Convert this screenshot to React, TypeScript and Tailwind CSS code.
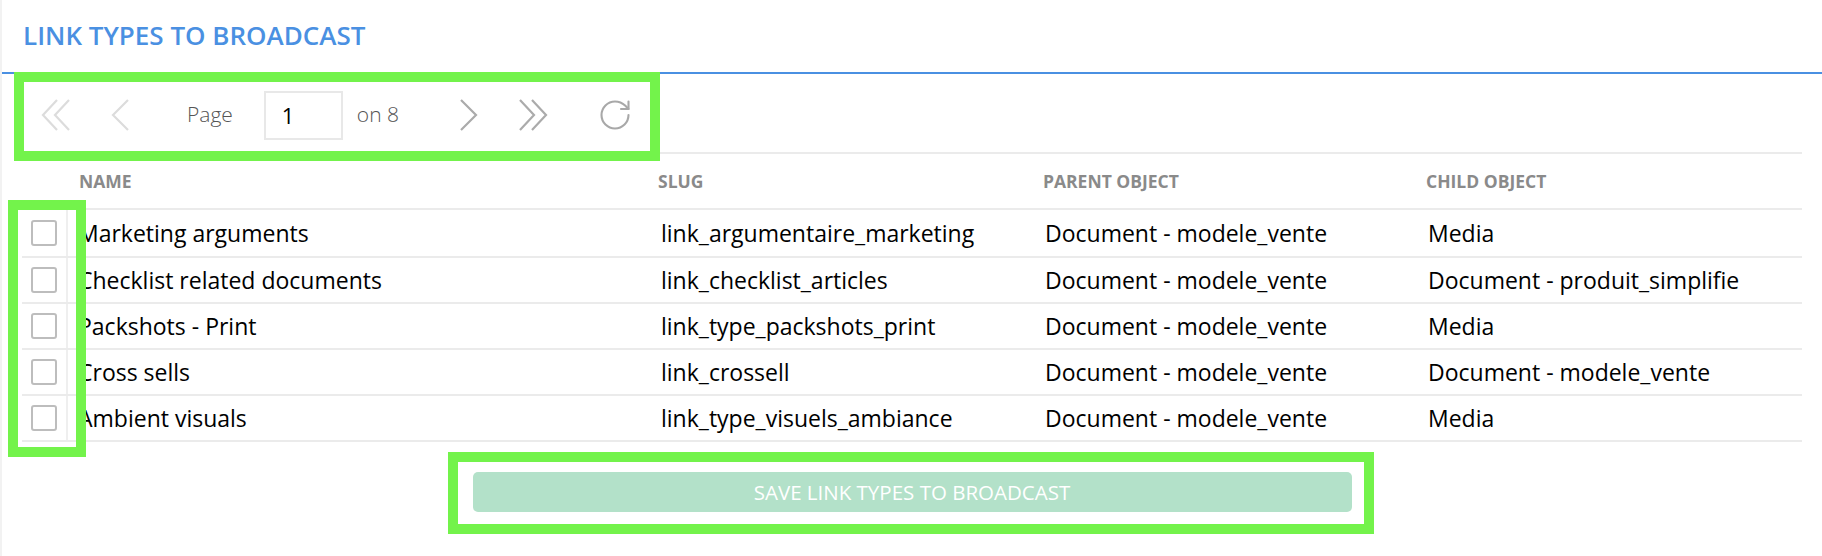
import { RotateCw } from 'lucide-react'

type LinkType = {
  name: string
  slug: string
  parent: string
  child: string
}

const linkTypes: LinkType[] = [
  { name: 'Marketing arguments', slug: 'link_argumentaire_marketing', parent: 'Document - modele_vente', child: 'Media' },
  { name: 'Checklist related documents', slug: 'link_checklist_articles', parent: 'Document - modele_vente', child: 'Document - produit_simplifie' },
  { name: 'Packshots - Print', slug: 'link_type_packshots_print', parent: 'Document - modele_vente', child: 'Media' },
  { name: 'Cross sells', slug: 'link_crossell', parent: 'Document - modele_vente', child: 'Document - modele_vente' },
  { name: 'Ambient visuals', slug: 'link_type_visuels_ambiance', parent: 'Document - modele_vente', child: 'Media' },
]

function DoubleChevron({ dir, color }: { dir: 'left' | 'right'; color: string }) {
  const d = dir === 'left'
    ? 'M17 1 L3 16 L17 31 M29 1 L15 16 L29 31'
    : 'M3 1 L17 16 L3 31 M15 1 L29 16 L15 31'
  return (
    <svg width="32" height="32" viewBox="0 0 32 32" fill="none" stroke={color} strokeWidth={2.2}>
      <path d={d} />
    </svg>
  )
}

function Chevron({ dir, color }: { dir: 'left' | 'right'; color: string }) {
  const d = dir === 'left' ? 'M18 1 L3 16 L18 31' : 'M2 1 L17 16 L2 31'
  return (
    <svg width="20" height="32" viewBox="0 0 20 32" fill="none" stroke={color} strokeWidth={2.2}>
      <path d={d} />
    </svg>
  )
}

function Pagination() {
  return (
    <div className="mx-[20px] flex h-[80px] items-center border-b-2 border-[#ebebeb] pt-[4px]">
      <button className="flex w-[68px] items-center justify-center">
        <DoubleChevron dir="left" color="#dcdcdc" />
      </button>
      <button className="flex w-[60px] items-center justify-center">
        <Chevron dir="left" color="#dcdcdc" />
      </button>
      <span className="ml-[37px] text-[21px] font-light text-[#555]">Page</span>
      <input
        readOnly
        value="1"
        className="ml-[31px] h-[49px] w-[79px] border-2 border-[#e8e8e8] pl-[16px] text-[22px] text-black outline-none"
      />
      <span className="ml-[14px] text-[21px] font-light text-[#555]">on 8</span>
      <button className="ml-[40px] flex w-[60px] items-center justify-center">
        <Chevron dir="right" color="#ababab" />
      </button>
      <button className="flex w-[67px] items-center justify-center">
        <DoubleChevron dir="right" color="#ababab" />
      </button>
      <button className="ml-[15px] flex w-[68px] items-center justify-center">
        <RotateCw size={36} strokeWidth={1.4} color="#a8a8a8" />
      </button>
    </div>
  )
}

const gridCols = 'grid grid-cols-[46px_579px_385px_383px_387px] items-center'

export default function App() {
  return (
    <div className="relative h-[556px] w-full overflow-hidden border-l-2 border-[#f2f2f2] bg-white font-['Open_Sans',sans-serif]">
      <div className="flex h-[74px] items-center border-b-2 border-[#4a90e2] pb-[2px] pl-[21px]">
        <h2 className="text-[26px] font-semibold uppercase leading-none text-[#4a90e2]">Link types to broadcast</h2>
      </div>

      <Pagination />

      <div className="mx-[20px]">
        <div className={`${gridCols} h-[56px] border-b-2 border-[#ebebeb]`}>
          <div />
          <div className="pl-[11px] text-[17.5px] font-bold uppercase text-[#8a8a8a]">Name</div>
          <div className="pl-[11px] text-[17.5px] font-bold uppercase text-[#8a8a8a]">Slug</div>
          <div className="pl-[11px] text-[17.5px] font-bold uppercase text-[#8a8a8a]">Parent object</div>
          <div className="pl-[11px] text-[17.5px] font-bold uppercase text-[#8a8a8a]">Child object</div>
        </div>
        {linkTypes.map((row, i) => (
          <div
            key={row.slug}
            className={`${gridCols} border-b-2 border-[#ebebeb] ${i === 0 ? 'h-[48px]' : 'h-[46px]'}`}
          >
            <div className="flex h-full items-center justify-center border-r-2 border-[#efefef]">
              <span className="block h-[26px] w-[26px] rounded-[3px] border-2 border-[#bdbdbd] bg-white" />
            </div>
            <div className="pl-[10px] text-[23px] text-black">{row.name}</div>
            <div className="pl-[14px] text-[23px] text-black">{row.slug}</div>
            <div className="pl-[13px] text-[23px] text-black">{row.parent}</div>
            <div className="pl-[13px] text-[23px] text-black">{row.child}</div>
          </div>
        ))}
      </div>

      <div className="mt-[30px] flex justify-center">
        <button className="h-[40px] w-[879px] rounded-[5px] bg-[#b3e1c9] text-[20.5px] uppercase text-white">
          Save link types to broadcast
        </button>
      </div>

      {/* highlight frames */}
      <div className="pointer-events-none absolute left-[12px] top-[72px] h-[89px] w-[646px] border-[10px] border-[#73f34b]" />
      <div className="pointer-events-none absolute left-[6px] top-[200px] h-[257px] w-[78px] border-[10px] border-[#73f34b]" />
      <div className="pointer-events-none absolute left-[446px] top-[452px] h-[82px] w-[926px] border-[10px] border-[#73f34b]" />
    </div>
  )
}
